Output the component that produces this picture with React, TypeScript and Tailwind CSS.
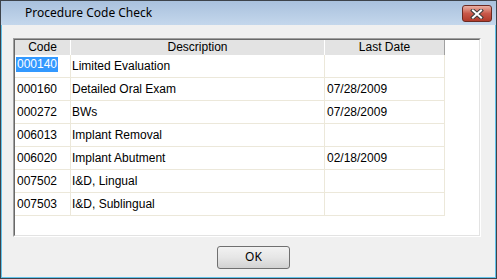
import React from "react";

type Row = { code: string; desc: string; date: string };

const rows: Row[] = [
  { code: "000140", desc: "Limited Evaluation", date: "" },
  { code: "000160", desc: "Detailed Oral Exam", date: "07/28/2009" },
  { code: "000272", desc: "BWs", date: "07/28/2009" },
  { code: "006013", desc: "Implant Removal", date: "" },
  { code: "006020", desc: "Implant Abutment", date: "02/18/2009" },
  { code: "007502", desc: "I&D, Lingual", date: "" },
  { code: "007503", desc: "I&D, Sublingual", date: "" },
];

function CloseButton() {
  return (
    <div className="mt-[4px] w-[30px] h-[17px] rounded-[3px] border border-[#6b2a22] bg-gradient-to-b from-[#e9b0a4] via-[#c8584a] to-[#b13a2a] flex items-center justify-center">
      <svg width="14" height="10" viewBox="0 0 14 10">
        <path d="M3 1.5 L11 8.5 M11 1.5 L3 8.5" stroke="#3c3c3c" strokeWidth="4" strokeLinecap="square" />
        <path d="M3 1.5 L11 8.5 M11 1.5 L3 8.5" stroke="#ffffff" strokeWidth="2" strokeLinecap="square" />
      </svg>
    </div>
  );
}

export default function App() {
  return (
    <div className="w-[497px] h-[279px] border border-[#3d434a] flex flex-col bg-[#f0f0f0]">
      {/* title bar */}
      <div className="h-[24px] flex justify-between bg-gradient-to-b from-[#a9c1dd] to-[#c4d7ec] pr-[4px]">
        <span className="pl-[24px] pt-[5px] text-[12px] leading-[14px] text-black" style={{ fontFamily: '"Noto Sans", sans-serif' }}>
          Procedure Code Check
        </span>
        <CloseButton />
      </div>

      {/* client */}
      <div className="flex-1 flex flex-col border-x border-b border-[#62c2ea] pt-[13px] pl-[11px]" style={{ fontFamily: '"Liberation Sans", Arial, sans-serif' }}>
        <div className="w-[468px] h-[199px] border-t border-l border-[#a0a0a0] border-r-white border-b-white border-r border-b">
          <div className="w-full h-full border-t border-l border-[#696969] border-r border-b border-r-[#e3e3e3] border-b-[#e3e3e3] bg-white">
            <div className="flex h-[15px] text-[12px] leading-[15px] text-black">
              <div className="w-[56px] bg-[#e3e3e3] border-r border-white text-center">Code</div>
              <div className="w-[254px] bg-[#e3e3e3] border-r border-white text-center">Description</div>
              <div className="w-[120px] bg-[#e3e3e3] border-r border-[#a0a0a0] text-center">Last Date</div>
            </div>
            {rows.map((r, i) => (
              <div key={r.code} className="flex w-[430px] h-[23px] border-b border-[#ece8da] text-[12px] leading-[22px] text-black">
                <div className="w-[56px] border-r border-[#ece8da] pl-[1px]">
                  {i === 0 ? (
                    <span className="inline-block mt-[2px] px-[1px] h-[15px] leading-[15px] bg-[#3399ff] text-white align-top">{r.code}</span>
                  ) : (
                    <span className="pl-[1px]">{r.code}</span>
                  )}
                </div>
                <div className="w-[254px] border-r border-[#ece8da] pl-[1px]">{r.desc}</div>
                <div className="w-[120px] border-r border-[#ece8da] pl-[2px]">{r.date}</div>
              </div>
            ))}
          </div>
        </div>

        <div className="pt-[7px] pl-[204px]">
          <button className="w-[73px] h-[23px] rounded-[3px] border border-[#707070] bg-gradient-to-b from-[#f2f2f2] via-[#e6e6e6] to-[#d2d2d2] text-[12px] text-black" style={{ fontFamily: '"Noto Sans", sans-serif' }}>
            OK
          </button>
        </div>
      </div>
    </div>
  );
}
